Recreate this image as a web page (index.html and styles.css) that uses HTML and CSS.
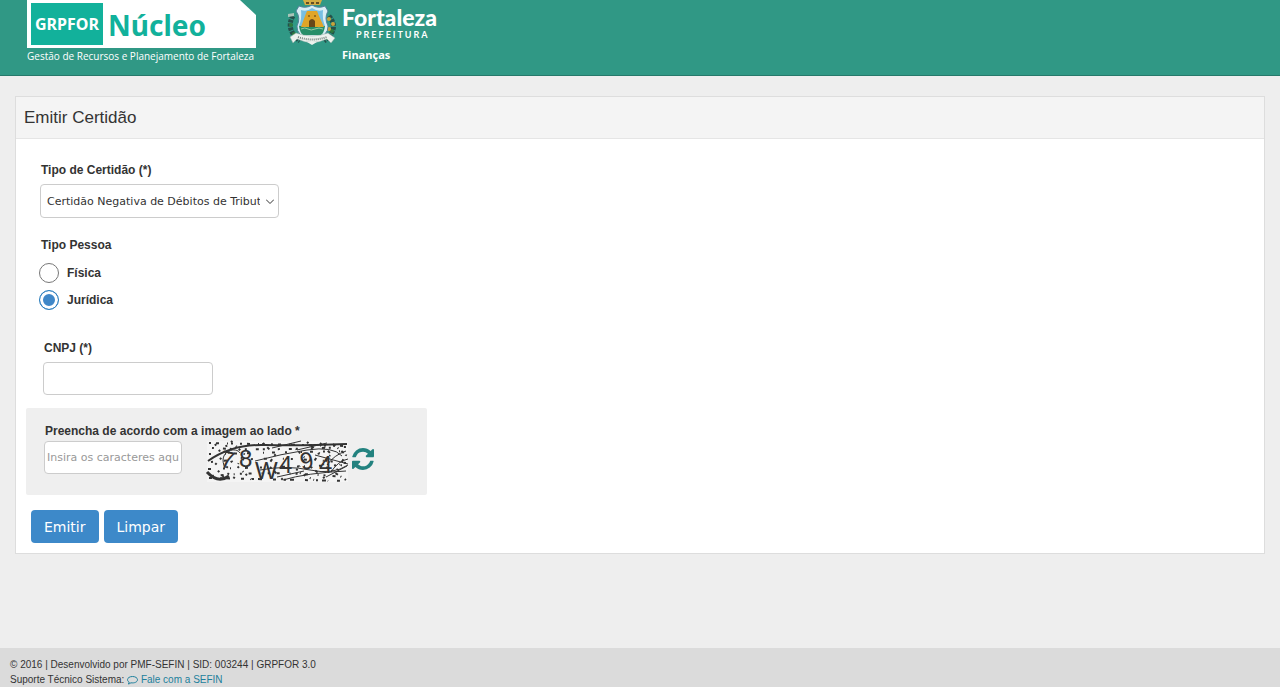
FILE: index.html
```
<!DOCTYPE html>
<html lang="pt-BR">
<head>
  <meta charset="UTF-8">
  <meta name="viewport" content="width=device-width, initial-scale=1.0">
  <title>Emitir Certidão</title>
  <link rel="stylesheet" href="styles.css">
</head>
<body>
  <header class="topbar">
    <div class="brand">
      <svg class="brand-logo" width="229" height="48" viewBox="0 0 229 48">
        <path d="M0 0H213L229 15V48H0z" fill="#fff"/>
        <rect x="4" y="3" width="72" height="42" fill="#12b19b"/>
        <text class="brand-box" x="8" y="30">GRPFOR</text>
        <text class="brand-name" x="81" y="36">Núcleo</text>
      </svg>
      <div class="brand-tagline">Gestão de Recursos e Planejamento de Fortaleza</div>
    </div>

    <div class="city">
      <svg class="city-arms" width="52" height="46" viewBox="0 0 52 46">
        <!-- side branches -->
        <g fill="none" stroke="#24504b" stroke-width="5" stroke-dasharray="3 1">
          <path d="M7 16Q-1 29 14 41"/>
          <path d="M43 16Q54 29 38 41"/>
        </g>
        <g fill="#2f7a3e">
          <circle cx="5" cy="25" r="2"/><circle cx="8" cy="34" r="2"/>
          <circle cx="46" cy="31" r="2"/><circle cx="41" cy="38" r="2"/>
        </g>
        <g fill="#c9a33a">
          <circle cx="43" cy="19" r="2"/><circle cx="47" cy="24" r="2"/><circle cx="43" cy="29" r="2"/>
        </g>
        <path d="M2 14l6-1v3l-6 1z" fill="#a9c4b8"/>
        <!-- crown -->
        <path d="M17 0H36L34 5H19z" fill="#d3ad43"/>
        <path d="M20 2h3v2h-3zM25 2h3v2h-3zM30 2h3v2h-3z" fill="#654f23"/>
        <!-- shield -->
        <path d="M13 6Q20 9 26 5Q32 9 39 6L42 11Q38 18 42 26Q43 35 26 43Q10 35 11 26Q15 18 10 11z" fill="#d9eef4" stroke="#54829b"/>
        <path d="M15 10Q21 12 26 8Q32 12 37 10Q36 19 39 26H13Q16 19 15 10z" fill="#78bfe2"/>
        <path d="M13 26H39Q38 33 35 35H17Q14 33 13 26z" fill="#278e68"/>
        <path d="M15 27L19 16L21 11H31L33 16L38 27z" fill="#e0a528"/>
        <path d="M23 27V21Q26 17 29 21V27z" fill="#684719"/>
        <path d="M22 15h2v2h-2zM28 15h2v2h-2z" fill="#9b701a"/>
        <path d="M15 29q4-2 7 0t7 0 8 0" fill="none" stroke="#9bcba1"/>
        <!-- ribbon -->
        <path d="M4 37L10 33Q26 39 42 33L49 38L45 43L41 39Q26 46 11 39L7 43z" fill="#eef2ee" stroke="#91aaa5" stroke-width=".5"/>
        <path d="M12 37Q26 42 41 37" fill="none" stroke="#788680" stroke-width="2" stroke-dasharray="1 1"/>
        <path d="M21 42L26 45L31 42z" fill="#eef2ee"/>
      </svg>
      <div class="city-text">
        <div class="city-name">Fortaleza</div>
        <div class="city-sub">PREFEITURA</div>
        <div class="city-dept">Finanças</div>
      </div>
    </div>
  </header>

  <main>
    <form class="panel">
      <h1 class="panel-title">Emitir Certidão</h1>
      <div class="panel-body">
        <div class="group">
          <label class="label" for="tipo-certidao">Tipo de Certidão (*)</label>
          <div class="select-wrap">
            <select id="tipo-certidao">
              <option>Certidão Negativa de Débitos de Tributos</option>
            </select>
            <svg width="8" height="5" viewBox="0 0 8 5"><path d="M0 .5L4 4.500L8 .5" fill="none" stroke="#333"/></svg>
          </div>
        </div>

        <div class="group" role="radiogroup" aria-labelledby="tipo-pessoa">
          <div class="label" id="tipo-pessoa">Tipo Pessoa</div>
          <div class="radios">
            <label><input type="radio" name="pessoa" value="F">Física</label>
            <label><input type="radio" name="pessoa" value="J" checked>Jurídica</label>
          </div>
        </div>

        <div class="group group-cnpj">
          <label class="label" for="cnpj">CNPJ (*)</label>
          <input type="text" class="field" id="cnpj">
        </div>

        <div class="captcha">
          <label class="label" for="captcha">Preencha de acordo com a imagem ao lado *</label>
          <div class="captcha-row">
            <input type="text" class="field" id="captcha" placeholder="Insira os caracteres aqui">
            <svg class="captcha-image" width="141" height="41" viewBox="0 0 141 41">
              <rect width="141" height="41" fill="#f4f4f4"/>
              <g class="captcha-chars">
                <text x="14" y="27" transform="rotate(12 20 18)">7</text>
                <text x="32" y="26">8</text>
                <text x="48" y="38">W</text>
                <text x="72" y="32">4</text>
                <text x="93" y="28" transform="rotate(-10 99 20)">9</text>
                <text x="112" y="32">4</text>
              </g>
              <g fill="none" stroke="#333">
                <path d="M1 20Q25 3 58 4T140 3" stroke-width="2"/>
                <path d="M0 31Q11 43 22 35" stroke-width="3"/>
                <path d="M18 27C10 10 29 5 33 12M48 20Q74 13 100 9T135 15"/>
                <path d="M53 29Q80 24 103 29T141 24M76 39Q99 32 139 30"/>
                <path d="M65 7L94 0M90 9L120 2M108 14L141 23M119 36L140 25M70 36L97 30"/>
                <path d="M120 24Q127 14 139 10M124 31Q131 20 141 18"/>
              </g>
              <!-- noise -->
              <g fill="none" stroke="#333" stroke-width="2">
                <path d="M2 2L140 5" stroke-dasharray="2 5 3 8 1 3 2 7"/>
                <path d="M5 7Q50 10 139 6" stroke-dasharray="2 9 3 4 2 13"/>
                <path d="M2 13L139 10" stroke-dasharray="2 14 1 8 3 10"/>
                <path d="M4 21Q70 14 139 22" stroke-dasharray="2 11 3 16 1 7"/>
                <path d="M1 28L140 24" stroke-dasharray="3 12 2 5 1 14"/>
                <path d="M5 35Q60 29 138 36" stroke-dasharray="2 7 3 10 1 5"/>
                <path d="M2 37L140 40" stroke-dasharray="3 8 2 4 4 11"/>
                <path d="M24 0L37 13L30 25L46 40M84 3L98 17L89 30L107 39" stroke-dasharray="2 5 1 3"/>
                <path d="M113 2L124 13L116 24L139 39M126 3L139 14L130 29" stroke-dasharray="3 3 1 4"/>
                <path d="M8 3L16 15L7 25L18 38M19 4L25 20L17 30L32 40" stroke-dasharray="2 5 2 8"/>
                <path d="M56 2L68 14L61 24L77 40M100 1L112 12L104 26L121 40" stroke-dasharray="2 4 3 7"/>
              </g>
            </svg>
            <button type="button" class="refresh" aria-label="Atualizar imagem">
              <svg width="22" height="22" viewBox="0 0 1536 1536" fill="#23827f">
                <path d="M1511 928q0 5-1 7-64 268-268 434.500T764 1536q-146 0-282.500-55T238 1324l-129 129q-19 19-45 19t-45-19-19-45V960q0-26 19-45t45-19h448q26 0 45 19t19 45-19 45l-137 137q71 66 161 102t187 36q134 0 250-65t186-179q11-17 53-117 8-23 30-23h192q13 0 22.500 9.500t9.500 22.500zm25-800v448q0 26-19 45t-45 19h-448q-26 0-45-19t-19-45 19-45l138-138Q969 256 768 256q-134 0-250 65T332 500q-11 17-53 117-8 23-30 23H50q-13 0-22.500-9.500T18 608v-7q65-268 270-434.500T768 0q146 0 284 55.500T1297 212l130-129q19-19 45-19t45 19 19 45z"/>
              </svg>
            </button>
          </div>
        </div>

        <div class="actions">
          <button type="submit" class="btn">Emitir</button>
          <button type="reset" class="btn">Limpar</button>
        </div>
      </div>
    </form>
  </main>

  <footer class="footer">
    <div>© 2016 | Desenvolvido por PMF-SEFIN | SID: 003244 | GRPFOR 3.0</div>
    <div>Suporte Técnico Sistema:
      <a href="#"><svg width="11" height="9" viewBox="0 0 11 9"><path d="M5.500.5C2.700.5.5 1.900.5 3.700c0 1 .7 1.900 1.700 2.400-.1.800-.5 1.400-1 1.900 1.200-.2 2.100-.6 2.700-1.200 3.600.5 6.600-.8 6.600-3.100C10.500 1.900 8.300.5 5.500.5z" fill="none" stroke="currentColor"/></svg> Fale com a SEFIN</a>
    </div>
  </footer>
</body>
</html>
```

FILE: styles.css
```
* {
  box-sizing: border-box;
}

body {
  display: flex;
  flex-direction: column;
  min-height: 100vh;
  margin: 0;
  background-color: #eee;
  color: #333;
  font-family: "Liberation Sans", Arial, sans-serif;
  font-size: 12px;
}

svg {
  display: block;
}

/* Header */

.topbar {
  display: flex;
  gap: 30px;
  height: 76px;
  padding-left: 27px;
  background-color: #309885;
  border-bottom: 1px solid #26796b;
  color: #fff;
}

.brand {
  width: 229px;
}

.brand-box {
  fill: #fff;
  font: bold 16px "Noto Sans", sans-serif;
}

.brand-name {
  fill: #12b19b;
  font: bold 28px "Noto Sans", sans-serif;
}

.brand-tagline {
  font: 10px/16px "Open Sans", sans-serif;
  white-space: nowrap;
}

.city {
  display: flex;
  gap: 4px;
}

.city-name {
  padding-top: 4px;
  font: 900 23px/26px Lato, sans-serif;
}

.city-sub {
  padding-left: 14px;
  font: bold 9px/9px Lato, sans-serif;
  letter-spacing: 2px;
}

.city-dept {
  padding-top: 7px;
  font: bold 11px/18px "Open Sans", sans-serif;
}

/* Form panel */

main {
  flex: 1;
  padding: 20px 15px;
}

.panel {
  background-color: #fff;
  border: 1px solid #ddd;
}

.panel-title {
  margin: 0;
  padding: 1px 8px 0;
  background-color: #f4f4f4;
  border-bottom: 1px solid #e5e5e5;
  font-size: 17px;
  font-weight: normal;
  line-height: 40px;
}

.panel-body {
  padding: 21px 10px 10px;
}

.group {
  margin: 0 0 17px 14px;
}

.label {
  display: block;
  padding-left: 1px;
  font-weight: bold;
  line-height: 20px;
}

.select-wrap {
  position: relative;
  width: 239px;
  margin-top: 4px;
}

.select-wrap svg {
  position: absolute;
  top: 15px;
  right: 5px;
  pointer-events: none;
}

.select-wrap select {
  display: block;
  width: 100%;
  height: 34px;
  padding: 0 18px 0 6px;
  appearance: none;
  background-color: #fff;
  border: 1px solid #ccc;
  border-radius: 4px;
  color: #333;
  font: 11px "DejaVu Sans", Verdana, sans-serif;
}

.radios {
  margin: 4px 0 25px -1px;
}

.radios label {
  display: flex;
  align-items: center;
  gap: 8px;
  height: 27px;
  font-weight: bold;
}

.radios input {
  width: 20px;
  height: 20px;
  margin: 0;
  appearance: none;
  background-color: #fff;
  border: 1px solid #777;
  border-radius: 50%;
}

.radios input:checked {
  background-color: #3f87c8;
  border-color: #2d7fbd;
  box-shadow: inset 0 0 0 3px #fff;
}

.group-cnpj {
  margin: 0 0 13px 17px;
}

.field {
  display: block;
  height: 33px;
  padding: 0 2px;
  background-color: #fff;
  border: 1px solid #ccc;
  border-radius: 4px;
  font: 11px "DejaVu Sans", Verdana, sans-serif;
}

.field::placeholder {
  color: #999;
}

#cnpj {
  width: 170px;
  margin-top: 4px;
}

.captcha {
  max-width: 401px;
  padding: 13px 18px;
  background-color: #efefef;
  border-radius: 2px;
}

.captcha-row {
  display: flex;
}

#captcha {
  width: 138px;
}

.captcha-image {
  margin-left: 25px;
  overflow: visible;
}

.captcha-chars {
  fill: #333;
  font: 24px "Liberation Sans", Arial, sans-serif;
}

.refresh {
  align-self: center;
  margin: 0 0 5px 4px;
  padding: 0;
  background: none;
  border: none;
  cursor: pointer;
}

.actions {
  display: flex;
  gap: 5px;
  padding: 15px 0 0 5px;
}

.btn {
  height: 33px;
  padding: 0 13px;
  background-color: #3d89c9;
  border: none;
  border-radius: 4px;
  color: #fff;
  font: 14px "DejaVu Sans", Verdana, sans-serif;
  cursor: pointer;
}

/* Footer */

.footer {
  padding: 9px 10px 0;
  background-color: #dbdbdb;
  font-size: 10px;
  line-height: 15px;
}

.footer a {
  color: #1c7f9c;
  text-decoration: none;
}

.footer svg {
  display: inline-block;
  vertical-align: middle;
}
```
